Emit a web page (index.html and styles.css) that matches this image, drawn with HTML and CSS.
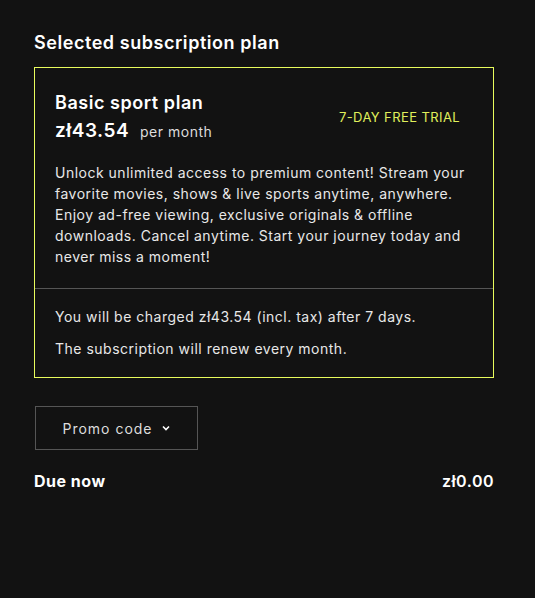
FILE: index.html
```html
<!DOCTYPE html>
<html lang="en">
<head>
  <meta charset="UTF-8">
  <title>Selected subscription plan</title>
  <link rel="stylesheet" href="styles.css">
</head>
<body>

<div class="checkout">
  <h2 class="section-title">Selected subscription plan</h2>

  <div class="plan-card">
    <div class="plan-main">
      <div class="plan-head">
        <div>
          <div class="plan-name">Basic sport plan</div>
          <div class="plan-price"><span class="amount">zł43.54</span> <span class="period">per month</span></div>
        </div>
        <div class="trial-badge">7-DAY FREE TRIAL</div>
      </div>
      <p class="plan-desc">Unlock unlimited access to premium content! Stream your favorite movies, shows &amp; live sports anytime, anywhere. Enjoy ad-free viewing, exclusive originals &amp; offline downloads. Cancel anytime. Start your journey today and never miss a moment!</p>
    </div>
    <div class="plan-terms">
      <p>You will be charged zł43.54 (incl. tax) after 7 days.</p>
      <p>The subscription will renew every month.</p>
    </div>
  </div>

  <button class="promo-btn">Promo code
    <svg width="10" height="10" viewBox="0 0 10 10"><path d="M2 3.5 L5 6.5 L8 3.5" fill="none" stroke="#fff" stroke-width="1.6"/></svg>
  </button>

  <div class="due-row">
    <span>Due now</span>
    <span>zł0.00</span>
  </div>
</div>

</body>
</html>
```

FILE: styles.css
```css
* {
  box-sizing: border-box;
}

body {
  margin: 0;
  background-color: #121212;
  color: #fff;
  font-family: Inter, "Open Sans", sans-serif;
  letter-spacing: 0.5px;
}

.checkout {
  padding: 32px 41px 0 34px;
}

.section-title {
  margin: 0 0 14px;
  font-size: 18px;
  font-weight: 600;
  letter-spacing: 0.55px;
}

.plan-card {
  border: 1px solid #e8fb5c;
}

.plan-main {
  padding: 24px 20px 21px 20px;
  border-bottom: 1px solid #555;
}

.plan-head {
  display: flex;
  justify-content: space-between;
  align-items: center;
}

.plan-name {
  font-size: 18px;
  font-weight: 600;
  letter-spacing: 0.55px;
}

.plan-price {
  margin-top: 6px;
}

.plan-price .amount {
  font-size: 19px;
  font-weight: 600;
  margin-right: 6px;
}

.plan-price .period {
  font-size: 14px;
  color: #ddd;
}

.trial-badge {
  margin-right: 13px;
  color: #e0f05c;
  font-size: 13px;
  letter-spacing: 0.4px;
}

.plan-desc {
  margin: 20px 0 0;
  font-size: 14px;
  line-height: 21px;
  color: #e8e8e8;
}

.plan-terms {
  padding: 17px 20px 18px;
  font-size: 14px;
  color: #e8e8e8;
}

.plan-terms p {
  margin: 0 0 11px;
  line-height: 21px;
}

.plan-terms p:last-child {
  margin-bottom: 0;
}

.promo-btn {
  margin-top: 28px;
  margin-left: 1px;
  width: 163px;
  height: 44px;
  display: flex;
  align-items: center;
  justify-content: center;
  gap: 8px;
  background: transparent;
  border: 1px solid #555;
  color: #ddd;
  font-family: inherit;
  font-size: 14px;
  letter-spacing: 1px;
}

.due-row {
  display: flex;
  justify-content: space-between;
  margin-top: 21px;
  font-size: 16px;
  font-weight: 700;
}

.due-row span:last-child {
  font-weight: 600;
}
```
